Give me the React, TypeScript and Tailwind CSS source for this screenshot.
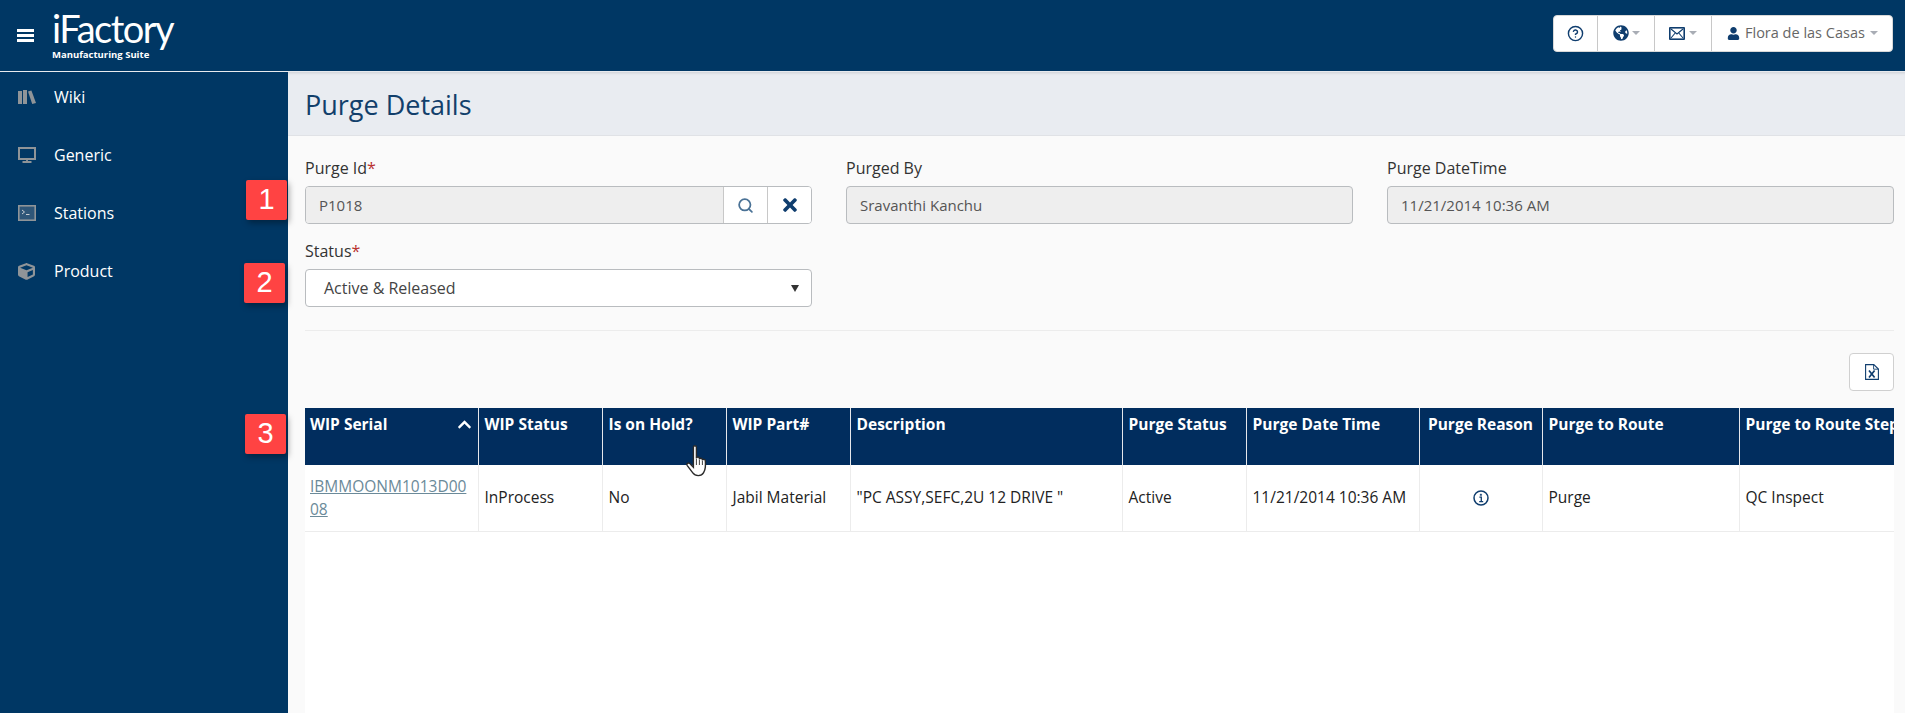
import { CircleHelp, Search } from 'lucide-react'
import { FaChevronUp, FaCube, FaGlobeAmericas, FaTimes, FaUser } from 'react-icons/fa'

const navItems = [
  { label: 'Wiki', icon: <BooksIcon /> },
  { label: 'Generic', icon: <MonitorIcon /> },
  { label: 'Stations', icon: <TerminalIcon /> },
  { label: 'Product', icon: <FaCube className="w-[17px] h-[17px]" /> },
]

const columns = [
  { title: 'WIP Serial', w: 'w-[173px]' },
  { title: 'WIP Status', w: 'w-[124px]' },
  { title: 'Is on Hold?', w: 'w-[124px]' },
  { title: 'WIP Part#', w: 'w-[124px]' },
  { title: 'Description', w: 'w-[272px]' },
  { title: 'Purge Status', w: 'w-[124px]' },
  { title: 'Purge Date Time', w: 'w-[173px]' },
  { title: 'Purge Reason', w: 'w-[123px]' },
  { title: 'Purge to Route', w: 'w-[197px]' },
  { title: 'Purge to Route Step', w: 'w-[200px]' },
]

function BooksIcon() {
  return (
    <svg viewBox="0 0 18 14" className="w-[18px] h-[14px]" fill="currentColor">
      <rect x="0" y="1" width="4" height="13" />
      <rect x="5" y="0" width="4" height="14" />
      <path d="M10 1.500 13.400.5 18 13 14.200 14Z" />
    </svg>
  )
}

function MonitorIcon() {
  return (
    <svg viewBox="0 0 18 16" className="w-[18px] h-[16px]" fill="none" stroke="currentColor">
      <rect x="1" y="1" width="16" height="11" strokeWidth="2" />
      <path d="M9 12v2.400M4.500 15h9" strokeWidth="1.800" />
    </svg>
  )
}

function TerminalIcon() {
  return (
    <svg viewBox="0 0 18 16" className="w-[18px] h-[16px]" fill="#2f5678" stroke="currentColor">
      <rect x="0.8" y="0.8" width="16.400" height="14.400" strokeWidth="1.600" />
      <path d="M4 5l2.500 2L4 9M8 9.500h3.500" fill="none" stroke="#c9ced3" strokeWidth="1" />
    </svg>
  )
}

function EnvelopeIcon() {
  return (
    <svg viewBox="0 0 16 13" className="w-[16px] h-[13px]" fill="none">
      <rect width="16" height="13" rx="1" fill="#0f3d6e" />
      <rect x="1.600" y="1.600" width="12.800" height="9.800" fill="#fff" />
      <path d="M2 2l6 5 6-5M2 11l4.200-5M14 11L9.800 6" stroke="#0f3d6e" strokeWidth="1.100" />
    </svg>
  )
}

function ExcelIcon() {
  return (
    <svg viewBox="0 0 14 16" className="w-[14px] h-[16px]" fill="none">
      <path d="M.6.6h8.200l4.600 4.400v10.400H.6Z" stroke="#0f3d6e" strokeWidth="1.100" />
      <path d="M8.600.8v4.400h4.600" stroke="#0f3d6e" strokeWidth="0.900" />
      <path d="M4 6.500l5.600 7M9.600 6.500 4 13.500" stroke="#0f3d6e" strokeWidth="1.700" />
    </svg>
  )
}

function InfoIcon() {
  return (
    <svg viewBox="0 0 16 16" className="w-[16px] h-[16px]" fill="none" stroke="#0f3d6e">
      <circle cx="8" cy="8" r="7" strokeWidth="1.500" />
      <path d="M6.400 7.200H8.300V11.600M6.200 11.600h4" strokeWidth="1.300" />
      <path d="M7.200 4h1.400v1.600H7.200Z" fill="#0f3d6e" strokeWidth="0.400" />
    </svg>
  )
}

function HandCursor() {
  return (
    <svg viewBox="0 0 24 32" className="w-[24px] h-[32px]">
      <path
        d="M7.400 2.200c0-2 3-2 3 0v11.200c.2-1.800 3-1.800 3 0v1c.2-1.700 2.900-1.600 3 .2v.8c.3-1.500 2.800-1.300 2.900.4 0 0 .3 3.800 0 6.600-.2 2.200-.7 3.400-1.600 5-1 1.800-1.300 3.200-5.400 3.200-3 0-4.200-.8-5.500-2.700L1.300 20.600c-1.300-2 1-3.400 2.500-2l3.600 3.600Z"
        fill="#fff"
        stroke="#2a2a2a"
        strokeWidth="1.400"
      />
      <path d="M10.400 14v6M13.400 15v5M16.400 16v4" stroke="#2a2a2a" strokeWidth="0.900" />
    </svg>
  )
}

function Caret() {
  return <span className="inline-block border-x-[4px] border-x-transparent border-t-[4px] border-t-[#a9adb5]" />
}

function NumberBadge({ n, className }: { n: number; className: string }) {
  return (
    <div
      className={`absolute w-[41px] h-[40px] bg-[#ff4343] rounded-[2px] shadow-[2px_3px_6px_rgba(0,0,0,0.35)] flex items-center justify-center text-white text-[29px] font-['Liberation_Sans',sans-serif] ${className}`}
    >
      {n}
    </div>
  )
}

function Field({ label, required, children }: { label: string; required?: boolean; children: React.ReactNode }) {
  return (
    <div className="flex flex-col">
      <label className="h-[29px] text-[16px] leading-[20px] text-[#333] pt-[1px]">
        {label}
        {required && <span className="text-[#b8312f]">*</span>}
      </label>
      {children}
    </div>
  )
}

function ReadOnlyInput({ value }: { value: string }) {
  return (
    <div className="h-[38px] border border-[#b9bcbf] rounded-[4px] bg-[#eeeeee] flex items-center px-[13px] text-[15px] text-[#555]">
      {value}
    </div>
  )
}

export default function App() {
  return (
    <div className="h-[713px] w-[1905px] overflow-hidden flex flex-col bg-[#fafafa] font-['Open_Sans',sans-serif]">
      <header className="h-[72px] shrink-0 bg-[#003764] border-b border-b-[#e8eaee] flex items-center justify-between pl-[17px] pr-[12px]">
        <div className="flex items-center">
          <div className="w-[17px] h-[13px] flex flex-col justify-between">
            <span className="h-[3px] bg-white" />
            <span className="h-[3px] bg-white" />
            <span className="h-[3px] bg-white" />
          </div>
          <div className="ml-[18px] flex flex-col text-white -mt-[3px] w-[125px]">
            <span className="font-['Lato',sans-serif] font-normal text-[38px] leading-[42px] tracking-[-1.500px]">iFactory</span>
            <span className="text-[9.500px] leading-[12px] font-bold whitespace-nowrap">Manufacturing Suite</span>
          </div>
        </div>
        <div className="flex w-[340px] h-[37px] mb-[5px] bg-white rounded-[4px] text-[#0f3d6e] divide-x divide-[#c8c8c8] border border-[#d8d8d8]">
          <div className="w-[44px] flex items-center justify-center">
            <CircleHelp className="w-[17px] h-[17px]" strokeWidth={2} />
          </div>
          <div className="w-[57px] flex items-center justify-center gap-[3px]">
            <FaGlobeAmericas className="w-[16px] h-[16px]" />
            <Caret />
          </div>
          <div className="w-[57px] flex items-center justify-center gap-[4px]">
            <EnvelopeIcon />
            <Caret />
          </div>
          <div className="flex-1 flex items-center gap-[5px] pl-[15px] text-[14.500px] text-[#666] whitespace-nowrap">
            <FaUser className="w-[13px] h-[13px] text-[#0f3d6e]" />
            <span>Flora de las Casas</span>
            <Caret />
          </div>
        </div>
      </header>

      <div className="flex-1 min-h-0 flex relative">
        <nav className="w-[288px] shrink-0 bg-[#003764] pl-[18px]">
          {navItems.map(item => (
            <div key={item.label} className="h-[50px] mb-[8px] flex items-center">
              <span className="w-[36px] text-[#8f9498] flex items-center">{item.icon}</span>
              <span className="text-[16px] text-white">{item.label}</span>
            </div>
          ))}
        </nav>

        <main className="flex-1 min-w-0 flex flex-col">
          <div className="h-[64px] shrink-0 bg-[#e9ecf1] border-b border-b-[#e0e2e6] flex items-center pl-[17px] pt-[3px] shadow-[inset_0_3px_3px_-2px_rgba(0,0,0,0.12)]">
            <h1 className="text-[27px] text-[#123f6b]">Purge Details</h1>
          </div>

          <div className="flex-1 min-h-0 flex flex-col pl-[17px] pr-[11px] pt-[21px]">
            <div className="grid grid-cols-3 gap-x-[34px]">
              <Field label="Purge Id" required>
                <div className="h-[38px] flex border border-[#b9bcbf] rounded-[4px] overflow-hidden">
                  <div className="flex-1 bg-[#eeeeee] flex items-center px-[13px] text-[15px] text-[#555]">P1018</div>
                  <div className="w-[44px] bg-white border-l border-l-[#c8c8c8] flex items-center justify-center">
                    <Search className="w-[17px] h-[17px] text-[#4a7296]" strokeWidth={2.500} />
                  </div>
                  <div className="w-[44px] bg-white border-l border-l-[#c8c8c8] flex items-center justify-center">
                    <FaTimes className="w-[20px] h-[20px] text-[#0f3d6e]" />
                  </div>
                </div>
              </Field>
              <Field label="Purged By">
                <ReadOnlyInput value="Sravanthi Kanchu" />
              </Field>
              <Field label="Purge DateTime">
                <ReadOnlyInput value="11/21/2014 10:36 AM" />
              </Field>
            </div>

            <div className="grid grid-cols-3 gap-x-[34px] mt-[16px]">
              <Field label="Status" required>
                <div className="h-[38px] border border-[#b9bcbf] rounded-[4px] bg-white flex items-center justify-between pl-[18px] pr-[12px] text-[16px] text-[#444]">
                  <span>Active &amp; Released</span>
                  <span className="border-x-[4px] border-x-transparent border-t-[7px] border-t-[#333]" />
                </div>
              </Field>
            </div>

            <div className="h-px bg-[#ececec] mt-[23px] shrink-0" />

            <div className="flex justify-end mt-[22px] shrink-0">
              <div className="w-[45px] h-[38px] bg-white border border-[#d0d0d0] rounded-[4px] flex items-center justify-center">
                <ExcelIcon />
              </div>
            </div>

            <div className="mt-[17px] flex-1 min-h-0 overflow-hidden bg-white relative">
              <table className="table-fixed w-[1634px] border-collapse text-[15.500px]">
                <colgroup>
                  {columns.map(c => (
                    <col key={c.title} className={c.w} />
                  ))}
                </colgroup>
                <thead>
                  <tr className="h-[57px] bg-[#012d5e] text-white">
                    {columns.map((c, i) => (
                      <th
                        key={c.title}
                        className={`align-top font-bold text-[15.500px] pt-[5px] whitespace-nowrap overflow-hidden ${i === 0 ? 'pl-[5px] pr-[6px]' : 'px-[6px] border-l border-l-[#e5e7eb]'} ${i === 7 ? 'text-center' : 'text-left'}`}
                      >
                        {i === 0 ? (
                          <span className="flex items-center justify-between">
                            {c.title}
                            <FaChevronUp className="w-[15px] h-[15px]" />
                          </span>
                        ) : (
                          c.title
                        )}
                      </th>
                    ))}
                  </tr>
                </thead>
                <tbody>
                  <tr className="h-[66px] border-b border-b-[#ececec] text-[#222]">
                    <td className="px-[5px] leading-[23px]">
                      <a className="underline text-[#6b8a99] [overflow-wrap:anywhere]">IBMMOONM1013D0008</a>
                    </td>
                    <td className="px-[6px] border-l border-l-[#ececec]">InProcess</td>
                    <td className="px-[6px] border-l border-l-[#ececec]">No</td>
                    <td className="px-[6px] border-l border-l-[#ececec]">Jabil Material</td>
                    <td className="px-[6px] border-l border-l-[#ececec]">"PC ASSY,SEFC,2U 12 DRIVE "</td>
                    <td className="px-[6px] border-l border-l-[#ececec]">Active</td>
                    <td className="px-[6px] border-l border-l-[#ececec] whitespace-nowrap">11/21/2014 10:36 AM</td>
                    <td className="px-[6px] border-l border-l-[#ececec]">
                      <div className="flex justify-center">
                        <InfoIcon />
                      </div>
                    </td>
                    <td className="px-[6px] border-l border-l-[#ececec]">Purge</td>
                    <td className="px-[6px] border-l border-l-[#ececec]">QC Inspect</td>
                  </tr>
                </tbody>
              </table>
            </div>
          </div>
        </main>

        <NumberBadge n={1} className="left-[246px] top-[108px]" />
        <NumberBadge n={2} className="left-[244px] top-[191px]" />
        <NumberBadge n={3} className="left-[245px] top-[342px]" />
        <div className="absolute left-[686px] top-[373px]">
          <HandCursor />
        </div>
      </div>
    </div>
  )
}
